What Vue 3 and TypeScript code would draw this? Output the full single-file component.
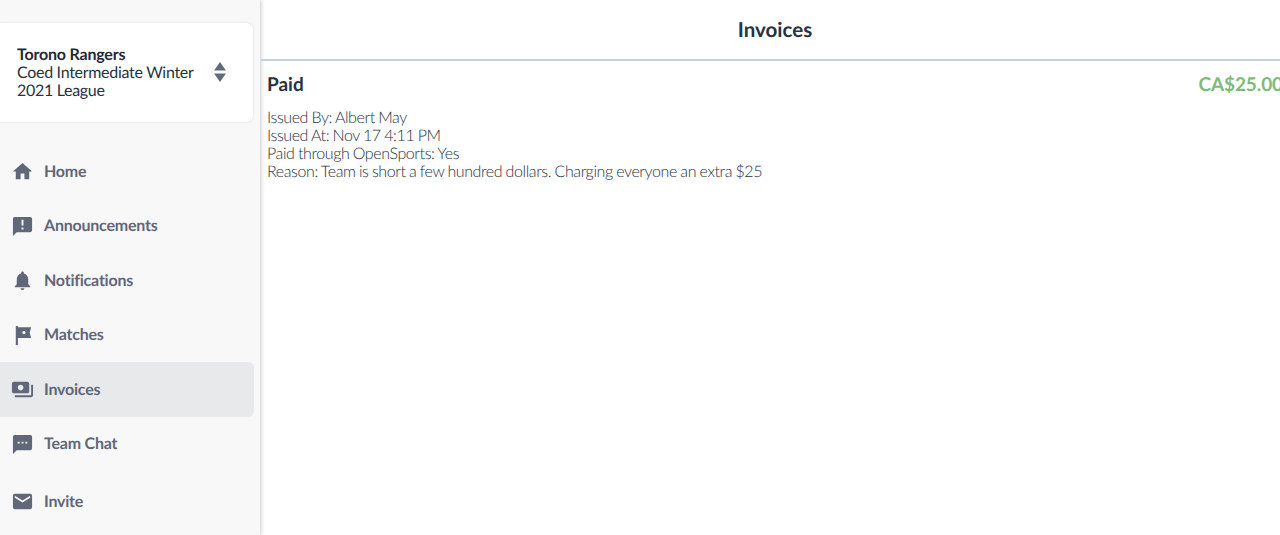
<template>
  <div class="app-shell">
    <aside class="sidebar">
      <div class="team-card">
        <div class="team-card__text">
          <div class="team-card__name">Torono Rangers</div>
          <div>Coed Intermediate Winter 2021 League</div>
        </div>
        <svg class="team-card__sort" viewBox="0 0 12 20" width="12" height="20">
          <path d="M6 0l6 8.5H0z" />
          <path d="M0 11.5h12L6 20z" />
        </svg>
      </div>

      <nav class="nav">
        <a
          v-for="item in navItems"
          :key="item.label"
          class="nav__item"
          :class="{ 'nav__item--active': item.active, 'nav__item--last': item.label === 'Invite' }"
        >
          <svg class="nav__icon" viewBox="0 0 24 24" width="23" height="23">
            <path :d="item.icon" fill-rule="evenodd" />
          </svg>
          <span>{{ item.label }}</span>
        </a>
      </nav>
    </aside>

    <main class="content">
      <header class="content__header">Invoices</header>
      <section class="invoice">
        <div class="invoice__top">
          <div class="invoice__status">Paid</div>
          <div class="invoice__amount">CA$25.00</div>
        </div>
        <div class="invoice__details">
          <div>Issued By: Albert May</div>
          <div>Issued At: Nov 17 4:11 PM</div>
          <div>Paid through OpenSports: Yes</div>
          <div>Reason: Team is short a few hundred dollars. Charging everyone an extra $25</div>
        </div>
      </section>
    </main>
  </div>
</template>

<script setup lang="ts">
interface NavItem {
  label: string
  icon: string
  active?: boolean
}

const navItems: NavItem[] = [
  { label: 'Home', icon: 'M10 20v-6h4v6h5v-8h3L12 3 2 12h3v8z' },
  {
    label: 'Announcements',
    icon: 'M20 2H4c-1.1 0-1.99.9-1.99 2L2 22l4-4h14c1.1 0 2-.9 2-2V4c0-1.1-.9-2-2-2zm-7 9h-2V5h2v6zm0 4h-2v-2h2v2z',
  },
  {
    label: 'Notifications',
    icon: 'M12 22c1.1 0 2-.9 2-2h-4c0 1.1.89 2 2 2zm6-6v-5c0-3.07-1.64-5.64-4.5-6.32V4c0-.83-.67-1.5-1.5-1.5s-1.5.67-1.5 1.5v.68C7.63 5.36 6 7.92 6 11v5l-2 2v1h16v-1l-2-2z',
  },
  {
    label: 'Matches',
    icon: 'M5 2h2.2v1.5H21l-1.5 5.5L21 14.5H7.2V22H5V2zM13.5 7.2a1.7 1.7 0 1 0 0 3.4 1.7 1.7 0 0 0 0-3.4z',
  },
  {
    label: 'Invoices',
    icon: 'M19 14V6c0-1.1-.9-2-2-2H3c-1.1 0-2 .9-2 2v8c0 1.1.9 2 2 2h14c1.1 0 2-.9 2-2zm-9-1c-1.66 0-3-1.34-3-3s1.34-3 3-3 3 1.34 3 3-1.34 3-3 3zm13-6v11c0 1.1-.9 2-2 2H4v-2h17V7h2z',
    active: true,
  },
  {
    label: 'Team Chat',
    icon: 'M20 2H4c-1.1 0-1.99.9-1.99 2L2 22l4-4h14c1.1 0 2-.9 2-2V4c0-1.1-.9-2-2-2zM9 11H7V9h2v2zm4 0h-2V9h2v2zm4 0h-2V9h2v2z',
  },
  {
    label: 'Invite',
    icon: 'M20 4H4c-1.1 0-1.99.9-1.99 2L2 18c0 1.1.9 2 2 2h16c1.1 0 2-.9 2-2V6c0-1.1-.9-2-2-2zm0 4l-8 5-8-5V6l8 5 8-5v2z',
  },
]
</script>

<style>
html,
body {
  margin: 0;
  overflow: hidden;
}
</style>

<style scoped>
.app-shell {
  width: 1280px;
  height: 535px;
  display: flex;
  overflow: hidden;
  background: #fff;
  font-family: Lato, 'Open Sans', sans-serif;
  font-size: 16px;
  line-height: 18px;
  color: #273240;
  text-rendering: geometricPrecision;
}

.sidebar {
  flex: 0 0 260px;
  width: 260px;
  box-sizing: border-box;
  padding: 23px 6px 0 0;
  background: #f8f8f9;
  box-shadow: 1px 0 4px rgba(0, 0, 0, 0.22);
}

.team-card {
  height: 99px;
  margin-right: 1px;
  box-sizing: border-box;
  display: flex;
  align-items: center;
  justify-content: space-between;
  padding: 0 27px 2px 17px;
  background: #fff;
  border-radius: 0 6px 6px 0;
  box-shadow: 0 0 2px rgba(39, 50, 64, 0.2);
  letter-spacing: -0.3px;
}

.team-card__text {
  width: 184px;
  padding-top: 2px;
}

.team-card__name {
  font-weight: 700;
  letter-spacing: -0.2px;
  color: #1f2937;
}

.team-card__sort {
  fill: #5f6b7e;
  flex: none;
}

.nav {
  display: flex;
  flex-direction: column;
  margin-top: 22.4px;
}

.nav__item {
  height: 54.5px;
  display: flex;
  align-items: center;
  gap: 10.5px;
  padding-left: 10.5px;
  font-weight: 700;
  letter-spacing: -0.22px;
  color: #5f6779;
  border-radius: 0 6px 6px 0;
}

.nav__item--active {
  background: #e8e9eb;
}

.nav__item--last {
  margin-top: 3px;
}

.nav__icon {
  fill: #5f6779;
  flex: none;
}

.content {
  flex: 0 0 1028px;
  width: 1028px;
  margin-left: 1px;
}

.content__header {
  height: 59px;
  display: flex;
  align-items: center;
  justify-content: center;
  border-bottom: 2px solid #c5d0de;
  font-size: 20.5px;
  font-weight: 700;
  color: #273240;
}

.invoice {
  padding: 12px 6px;
}

.invoice__top {
  display: flex;
  justify-content: space-between;
  font-size: 19px;
  line-height: 23px;
  font-weight: 700;
  margin-bottom: 13px;
}

.invoice__amount {
  color: #7dbb7a;
  letter-spacing: -0.1px;
}

.invoice__details {
  font-weight: 300;
  letter-spacing: -0.4px;
  word-spacing: -0.5px;
  color: #273240;
}
</style>
